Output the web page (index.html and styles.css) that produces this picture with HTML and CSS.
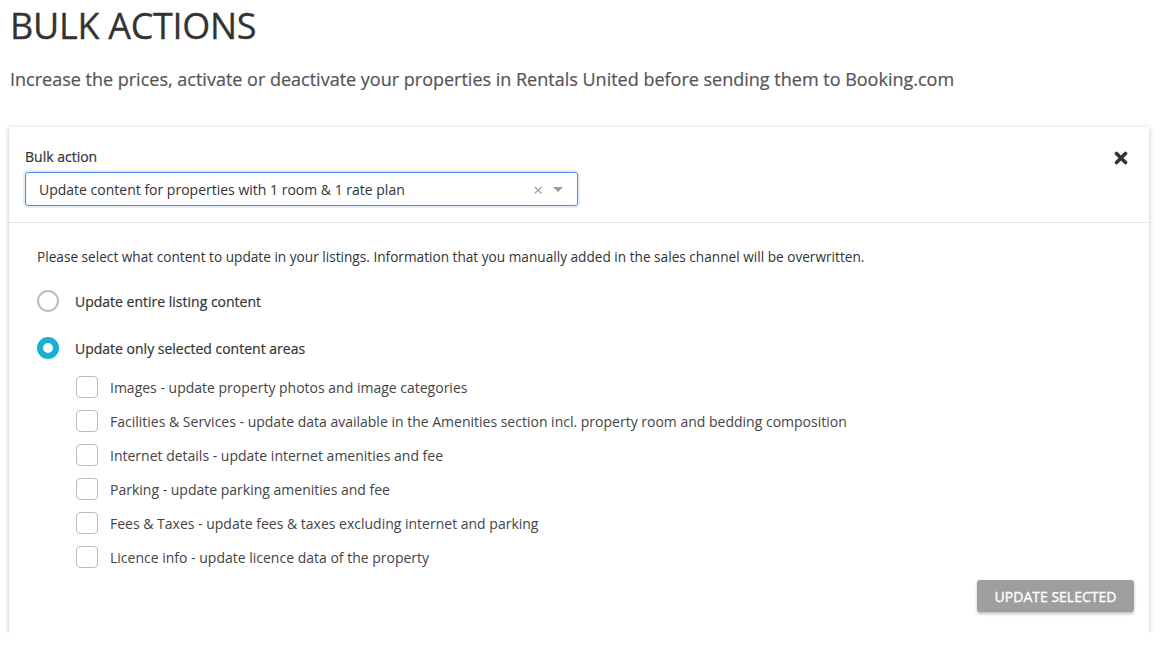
FILE: index.html
```html
<!DOCTYPE html>
<html>
<head>
<meta charset="utf-8">
<link rel="stylesheet" href="styles.css">
</head>
<body>
<h1 class="title">BULK ACTIONS</h1>
<p class="subtitle">Increase the prices, activate or deactivate your properties in Rentals United before sending them to Booking.com</p>
<div class="card">
  <div class="card-head">
    <div class="field">
      <label class="field-label">Bulk action</label>
      <div class="select">
        <span class="select-value">Update content for properties with 1 room &amp; 1 rate plan</span>
        <span class="select-clear">×</span>
        <span class="select-arrow"></span>
      </div>
    </div>
    <svg class="close" viewBox="0 0 14 14" width="14" height="14"><path d="M2.5 2.5 L11.5 11.5 M11.5 2.5 L2.5 11.5" stroke="#333" stroke-width="3.6" stroke-linecap="round"/></svg>
  </div>
  <div class="card-body">
    <p class="intro">Please select what content to update in your listings. Information that you manually added in the sales channel will be overwritten.</p>
    <div class="radio-row"><span class="radio"></span><span class="radio-label">Update entire listing content</span></div>
    <div class="radio-row"><span class="radio checked"></span><span class="radio-label">Update only selected content areas</span></div>
    <div class="checks">
      <div class="check-row"><span class="checkbox"></span><span>Images - update property photos and image categories</span></div>
      <div class="check-row"><span class="checkbox"></span><span>Facilities &amp; Services - update data available in the Amenities section incl. property room and bedding composition</span></div>
      <div class="check-row"><span class="checkbox"></span><span>Internet details - update internet amenities and fee</span></div>
      <div class="check-row"><span class="checkbox"></span><span>Parking - update parking amenities and fee</span></div>
      <div class="check-row"><span class="checkbox"></span><span>Fees &amp; Taxes - update fees &amp; taxes excluding internet and parking</span></div>
      <div class="check-row"><span class="checkbox"></span><span>Licence info - update licence data of the property</span></div>
    </div>
    <div class="actions"><button class="btn">UPDATE SELECTED</button></div>
  </div>
</div>
</body>
</html>
```
FILE: styles.css
```css
* { box-sizing: border-box; }
body {
  margin: 0;
  padding: 0 12px 0 9px;
  font-family: "Open Sans", "Liberation Sans", sans-serif;
  background: #fff;
  color: #333;
}
.title {
  margin: 0;
  padding: 4px 0 0 1px;
  font-size: 36px;
  font-weight: 400;
  line-height: 44px;
  color: #333;
  letter-spacing: -0.3px;
  -webkit-text-stroke: 0.3px #333;
}
.subtitle {
  margin: 19px 0 0 1px;
  font-size: 18px;
  line-height: 24px;
  color: #555;
  font-weight: 500;
  -webkit-text-stroke: 0.2px #555;
}
.card {
  margin-top: 36px;
  width: 1140px;
  background: #fff;
  box-shadow: 0 1px 5px rgba(0,0,0,0.25);
}
.card-head {
  display: flex;
  justify-content: space-between;
  align-items: flex-start;
  padding: 20px 21px 16px 16px;
  border-bottom: 1px solid #e3e3e3;
}
.field-label {
  display: block;
  font-size: 14px;
  line-height: 20px;
  color: #333;
  font-weight: 500;
  margin-bottom: 5px;
  -webkit-text-stroke: 0.2px #333;
}
.select {
  width: 553px;
  height: 34px;
  border: 1px solid #4a90e2;
  border-radius: 3px;
  box-shadow: 0 0 0 2px rgba(74,144,226,0.15);
  display: flex;
  align-items: center;
  padding: 0 14px 0 13px;
}
.select-value {
  flex: 1;
  font-size: 14px;
  color: #333;
}
.select-clear {
  color: #999;
  font-size: 17px;
  margin-right: 10px;
  line-height: 1;
}
.select-arrow {
  width: 0;
  height: 0;
  border-left: 5px solid transparent;
  border-right: 5px solid transparent;
  border-top: 5px solid #999;
}
.close {
  margin-top: 4px;
}
.card-body {
  padding: 25px 15px 21px 28px;
}
.intro {
  margin: 0;
  font-size: 13.65px;
  line-height: 18px;
  color: #333;
}
.radio-row {
  display: flex;
  align-items: center;
  gap: 16px;
  height: 22px;
  margin-top: 24px;
}
.radio-row + .radio-row { margin-top: 25px; }
.radio {
  width: 22px;
  height: 22px;
  border-radius: 50%;
  border: 2px solid #bdbdbd;
  flex: none;
}
.radio.checked {
  border: 6px solid #17b1d6;
}
.radio-label {
  font-size: 14px;
  font-weight: 500;
  color: #333;
  -webkit-text-stroke: 0.2px #333;
}
.checks {
  margin-top: 17px;
  margin-left: 39px;
  display: flex;
  flex-direction: column;
  gap: 12px;
}
.check-row {
  display: flex;
  align-items: center;
  gap: 12px;
  height: 22px;
  font-size: 14px;
  color: #444;
}
.checkbox {
  width: 22px;
  height: 22px;
  border: 1px solid #bcbcbc;
  border-radius: 4px;
  flex: none;
}
.actions {
  display: flex;
  justify-content: flex-end;
  margin-top: 12px;
}
.btn {
  width: 157px;
  height: 32px;
  border: none;
  border-radius: 3px;
  background: #9e9e9e;
  color: #fff;
  font-family: "Open Sans", "Liberation Sans", sans-serif;
  font-size: 14px;
  font-weight: 500;
  -webkit-text-stroke: 0.35px #fff;
  box-shadow: 0 2px 3px rgba(0,0,0,0.25);
}
```
